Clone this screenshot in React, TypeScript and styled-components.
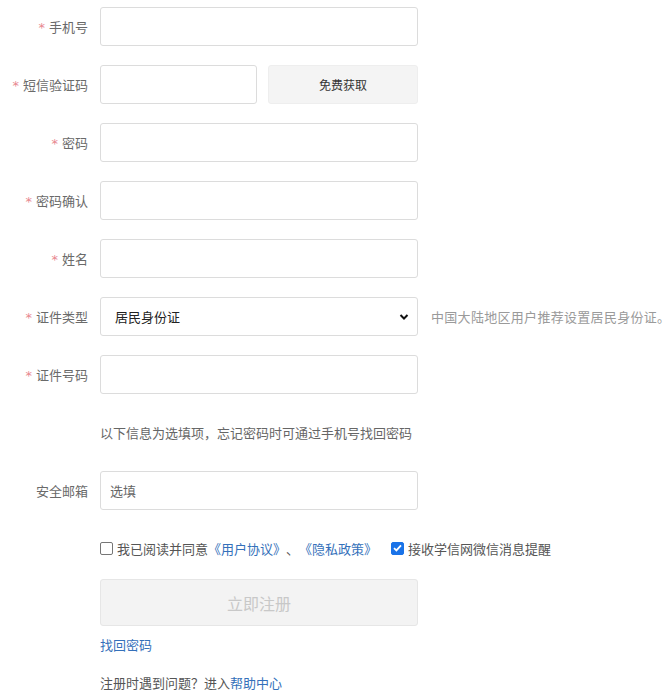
import React from "react";
import styled, { createGlobalStyle } from "styled-components";

const Global = createGlobalStyle`
  html, body { margin: 0; padding: 0; background: #fff; }
  body { font-family: "Noto Sans CJK SC", "Microsoft YaHei", sans-serif; }
  * { box-sizing: border-box; }
`;

const Page = styled.div`
  padding-top: 7px;
  width: 671px;
  display: flex;
  flex-direction: column;
`;

const Row = styled.div<{ $mb?: number; $h?: number }>`
  display: flex;
  align-items: center;
  height: ${(p) => p.$h ?? 39}px;
  margin-bottom: ${(p) => p.$mb ?? 19}px;
`;

const Label = styled.label`
  width: 88px;
  flex: none;
  font-size: 13px;
  color: #6a6a6a;
  margin-right: 12px;
  white-space: nowrap;
  display: flex;
  justify-content: flex-end;
  align-items: center;
`;

const Star = styled.span`
  color: #e88890;
  font-size: 13px;
  font-family: "DejaVu Sans", sans-serif;
  margin-right: 4px;
  position: relative;
  top: 1px;
`;

const Input = styled.input<{ $w?: number }>`
  width: ${(p) => p.$w ?? 318}px;
  height: 100%;
  border: 1px solid #dcdcdc;
  border-radius: 3px;
  padding: 0 9px;
  font-size: 13px;
  font-family: inherit;
  color: #333;
  outline: none;
  background: #fff;
  &::placeholder { color: #666; }
`;

const CodeButton = styled.button`
  width: 150px;
  height: 100%;
  margin-left: 11px;
  border: 1px solid #eee;
  background: #f4f4f4;
  border-radius: 3px;
  font-size: 12px;
  font-family: inherit;
  color: #333;
`;

const SelectWrap = styled.div`
  position: relative;
  width: 318px;
  height: 100%;
`;

const Select = styled.select`
  appearance: none;
  width: 100%;
  height: 100%;
  border: 1px solid #dcdcdc;
  border-radius: 3px;
  padding: 0 14px;
  font-size: 13px;
  font-family: inherit;
  color: #222;
  background: #fff;
  outline: none;
`;

const Chevron = styled.svg`
  position: absolute;
  right: 9px;
  top: 50%;
  margin-top: -4px;
  pointer-events: none;
`;

const Hint = styled.span`
  margin-left: 13px;
  font-size: 13px;
  color: #9a9a9a;
  white-space: nowrap;
  letter-spacing: 0.3px;
`;

const Note = styled.div`
  margin-left: 100px;
  font-size: 13px;
  color: #666;
`;

const Indent = styled.div<{ $mb?: number; $h?: number }>`
  margin-left: 100px;
  height: ${(p) => p.$h ?? 20}px;
  margin-bottom: ${(p) => p.$mb ?? 0}px;
  display: flex;
  align-items: center;
  font-size: 13px;
  color: #555;
  white-space: nowrap;
`;

const Box = styled.span<{ $checked?: boolean }>`
  width: 13px;
  height: 13px;
  flex: none;
  border-radius: 2px;
  border: 1px solid ${(p) => (p.$checked ? "#1a73e8" : "#767676")};
  background: ${(p) => (p.$checked ? "#1a73e8" : "#fff")};
  margin-right: 4px;
  display: inline-flex;
  align-items: center;
  justify-content: center;
`;

const Link = styled.a`
  color: #3470ba;
  text-decoration: none;
`;

const Gap = styled.span`
  display: inline-block;
  width: 14px;
`;

const Submit = styled.button`
  width: 318px;
  height: 47px;
  margin-left: 100px;
  margin-bottom: 8px;
  background: #f3f3f3;
  border: 1px solid #e6e6e6;
  border-radius: 3px;
  font-size: 16px;
  font-family: inherit;
  color: #c8c8c8;
`;

const fields: { label: string }[] = [
  { label: "密码" },
  { label: "密码确认" },
  { label: "姓名" },
];

export default function App() {
  return (
    <>
      <Global />
      <Page>
        <Row>
          <Label><Star>*</Star>手机号</Label>
          <Input />
        </Row>
        <Row>
          <Label><Star>*</Star>短信验证码</Label>
          <Input $w={157} />
          <CodeButton>免费获取</CodeButton>
        </Row>
        {fields.map((f) => (
          <Row key={f.label}>
            <Label><Star>*</Star>{f.label}</Label>
            <Input type={f.label.startsWith("密码") ? "password" : "text"} />
          </Row>
        ))}
        <Row>
          <Label><Star>*</Star>证件类型</Label>
          <SelectWrap>
            <Select defaultValue="id">
              <option value="id">居民身份证</option>
            </Select>
            <Chevron width="10" height="8" viewBox="0 0 10 8">
              <path d="M1.5 2 L5 5.5 L8.5 2" fill="none" stroke="#111" strokeWidth="2" />
            </Chevron>
          </SelectWrap>
          <Hint>中国大陆地区用户推荐设置居民身份证。</Hint>
        </Row>
        <Row>
          <Label><Star>*</Star>证件号码</Label>
          <Input />
        </Row>
        <Row>
          <Note>以下信息为选填项，忘记密码时可通过手机号找回密码</Note>
        </Row>
        <Row>
          <Label>安全邮箱</Label>
          <Input placeholder="选填" />
        </Row>
        <Indent $h={38} $mb={12}>
          <Box />
          我已阅读并同意<Link>《用户协议》</Link>、<Link>《隐私政策》</Link>
          <Gap />
          <Box $checked>
            <svg width="9" height="8" viewBox="0 0 9 8">
              <path d="M1 4.2 L3.4 6.4 L8 1.4" fill="none" stroke="#fff" strokeWidth="1.8" />
            </svg>
          </Box>
          接收学信网微信消息提醒
        </Indent>
        <Submit>立即注册</Submit>
        <Indent $h={20} $mb={18}>
          <Link>找回密码</Link>
        </Indent>
        <Indent $h={20}>
          注册时遇到问题？进入<Link>帮助中心</Link>
        </Indent>
      </Page>
    </>
  );
}
